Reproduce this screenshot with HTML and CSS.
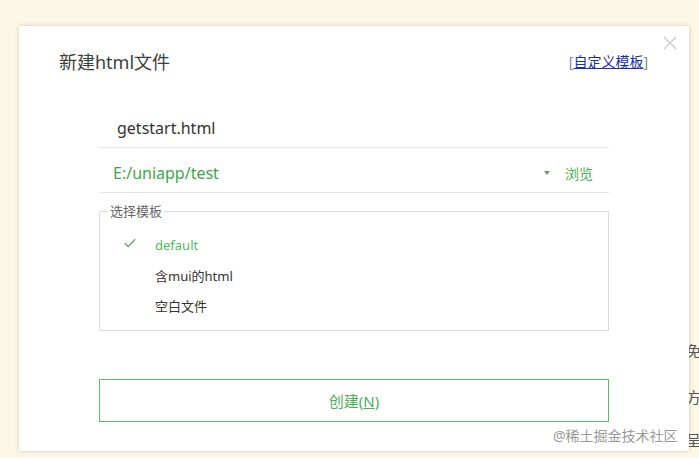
FILE: index.html
```html
<!DOCTYPE html>
<html lang="zh">
<head>
<meta charset="utf-8">
<link rel="stylesheet" href="styles.css">
</head>
<body>
<div class="bg-text">
  <span class="bg-ch c1">免</span>
  <span class="bg-ch c2">方</span>
  <span class="bg-ch c3">呈</span>
</div>
<div class="dialog">
  <svg class="close" width="14" height="14" viewBox="0 0 14 14"><path d="M1 1L13 13M13 1L1 13" stroke="#c8c8c8" stroke-width="1.2" fill="none"/></svg>
  <div class="header">
    <div class="title">新建html文件</div>
    <div class="custom"><span class="br">[</span><a class="link">自定义模板</a><span class="br">]</span></div>
  </div>
  <div class="body">
    <div class="row name-row">getstart.html</div>
    <div class="row path-row">
      <span class="path">E:/uniapp/test</span>
      <span class="caret"></span>
      <span class="browse">浏览</span>
    </div>
    <fieldset class="tpl">
      <legend>选择模板</legend>
      <div class="item active">
        <svg class="check" width="12" height="10" viewBox="0 0 12 10"><path d="M0.8 5.2L4.2 8.6L11.2 1.2" stroke="#4cae5a" stroke-width="1.3" fill="none"/></svg>
        <span>default</span>
      </div>
      <div class="item"><span>含mui的html</span></div>
      <div class="item"><span>空白文件</span></div>
    </fieldset>
    <div class="btn">创建(<u>N</u>)</div>
  </div>
</div>
<div class="watermark">@稀土掘金技术社区</div>
</body>
</html>
```
FILE: styles.css
```css
html, body {
  margin: 0;
  padding: 0;
}
body {
  width: 699px;
  height: 458px;
  overflow: hidden;
  background: #fdf7e6;
  font-family: "Noto Sans", "Noto Sans CJK SC", sans-serif;
  position: relative;
}
.bg-text {
  position: absolute;
  left: 686px;
  top: 0;
}
.bg-ch {
  position: absolute;
  left: 0;
  font-size: 15px;
  color: #555;
  line-height: 20px;
}
.c1 { top: 341px; }
.c2 { top: 387px; }
.c3 { top: 430px; }
.dialog {
  position: absolute;
  left: 19px;
  top: 26px;
  width: 670px;
  height: 425px;
  background: #fff;
  box-shadow: 0 0 4px rgba(120, 110, 80, 0.35);
  box-sizing: border-box;
}
.close {
  position: absolute;
  right: 12px;
  top: 10px;
}
.header {
  display: flex;
  justify-content: space-between;
  align-items: center;
  padding: 24px 41px 0 40px;
  height: 24px;
}
.title {
  font-size: 18px;
  color: #3b3f3a;
  line-height: 24px;
}
.custom {
  font-size: 14px;
  line-height: 20px;
}
.br { color: #7a8ca8; }
.link {
  color: #1a2fb0;
  text-decoration: underline;
}
.body {
  margin: 0 80px;
  width: 510px;
}
.row {
  display: flex;
  align-items: center;
  border-bottom: 1px solid #e6e6e6;
  box-sizing: border-box;
}
.name-row {
  margin-top: 34px;
  height: 40px;
  padding-left: 18px;
  font-size: 16px;
  color: #333;
}
.path-row {
  height: 45px;
  padding: 5px 16px 0 14px;
  font-size: 16px;
}
.path {
  color: #3aa845;
  flex: 1;
}
.caret {
  width: 0;
  height: 0;
  border-left: 3px solid transparent;
  border-right: 3px solid transparent;
  border-top: 4px solid #6a9a70;
  margin-right: 15px;
}
.browse {
  color: #4cb050;
  font-size: 14px;
}
.tpl {
  margin: 11px 0 0 0;
  padding: 12px 0 16px 0;
  border: 1px solid #dcdcdc;
  box-sizing: border-box;
  width: 510px;
  height: 127px;
  position: relative;
}
.tpl legend {
  font-size: 13px;
  color: #666;
  padding: 0 2px;
  margin-left: 8px;
  line-height: 14px;
}
.item {
  position: relative;
  height: 30px;
  display: flex;
  align-items: center;
  padding-left: 55px;
  font-size: 13px;
  color: #333;
}
.item.active { color: #52b862; }
.check {
  position: absolute;
  left: 24px;
  top: 8px;
}
.btn {
  margin-top: 48px;
  height: 43px;
  border: 1px solid #5cbb6a;
  box-sizing: border-box;
  display: flex;
  align-items: center;
  justify-content: center;
  font-size: 15px;
  color: #4cae5a;
}
.btn u { text-decoration: underline; }
.watermark {
  position: absolute;
  left: 553px;
  top: 426px;
  font-size: 14px;
  color: #9a9a9a;
  line-height: 20px;
}
```
